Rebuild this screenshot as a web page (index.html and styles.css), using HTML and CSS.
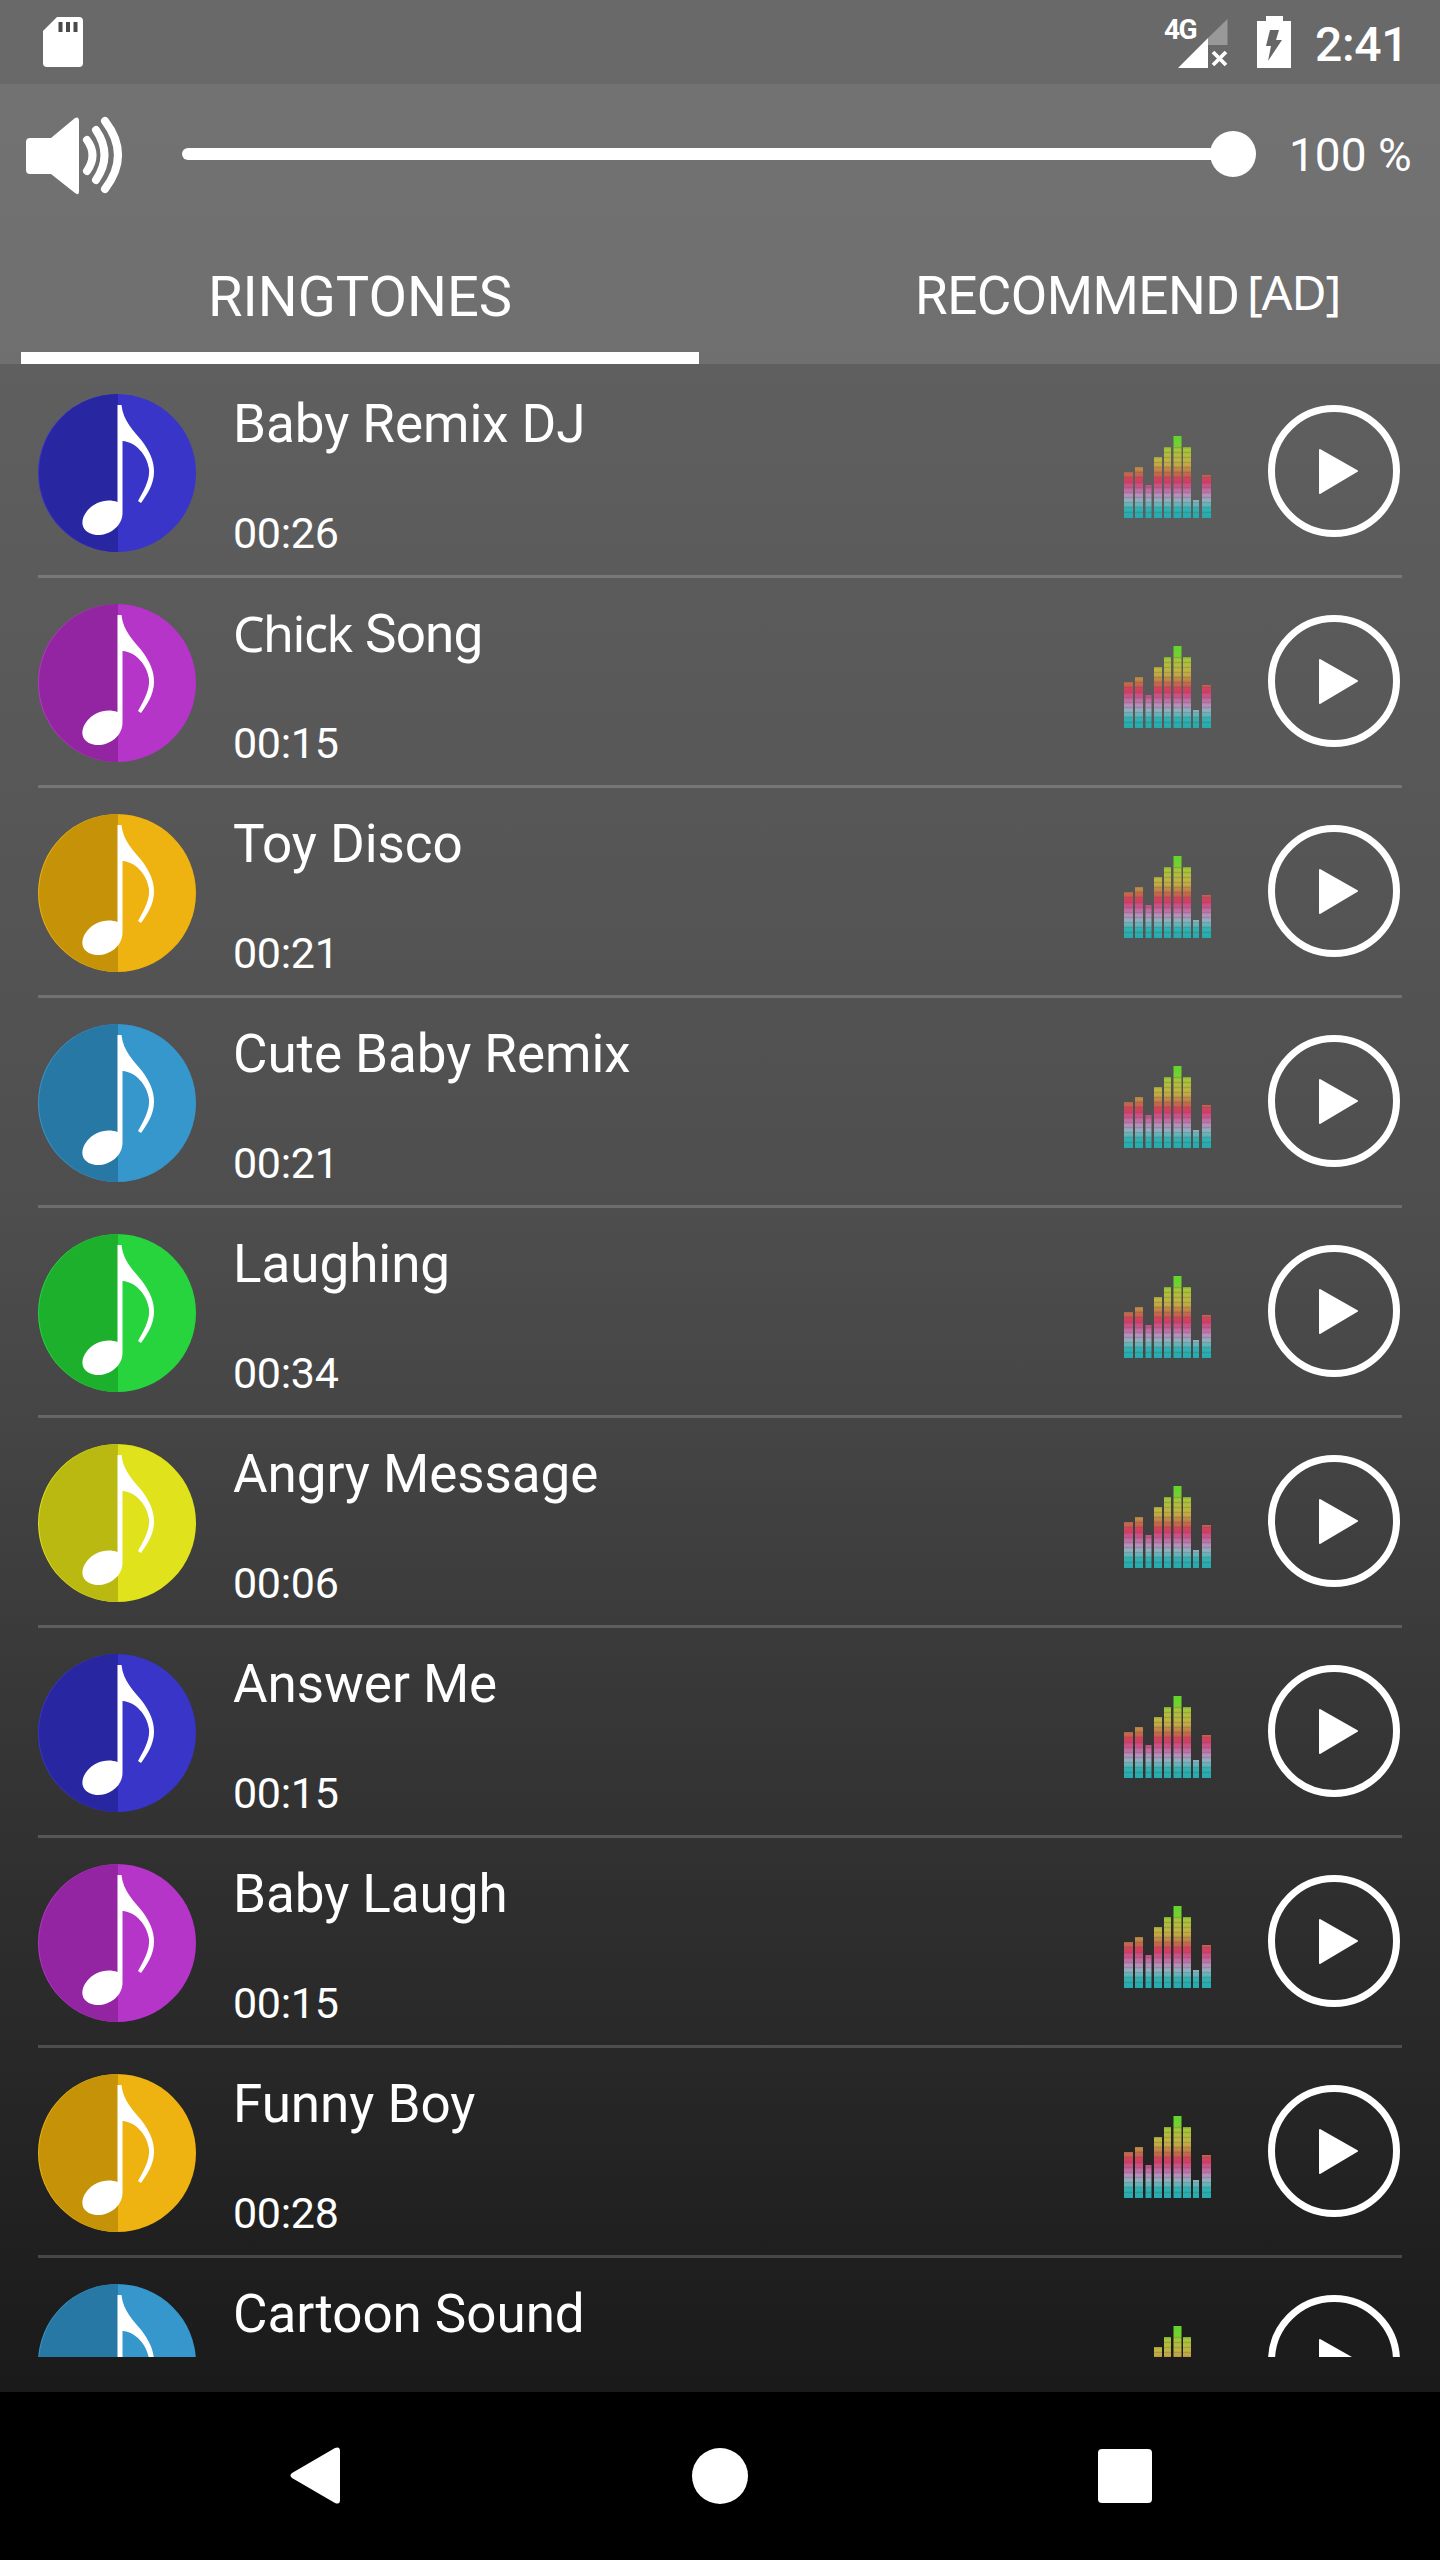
FILE: index.html
```html
<!DOCTYPE html>
<html lang="en">
<head>
<meta charset="utf-8">
<title>Ringtones</title>
<link rel="stylesheet" href="styles.css">
</head>
<body>
<svg class="defs" width="0" height="0" aria-hidden="true">
  <defs>
    <linearGradient id="bars" gradientUnits="userSpaceOnUse" x1="0" y1="0" x2="0" y2="82">
      <stop offset="0" stop-color="#5fd62c"/>
      <stop offset=".11" stop-color="#74d030"/>
      <stop offset=".17" stop-color="#a9c438"/>
      <stop offset=".33" stop-color="#c4b244"/>
      <stop offset=".45" stop-color="#c27048"/>
      <stop offset=".54" stop-color="#d83a60"/>
      <stop offset=".63" stop-color="#c75c94"/>
      <stop offset=".72" stop-color="#b98fbd"/>
      <stop offset=".8" stop-color="#86b6c0"/>
      <stop offset=".9" stop-color="#2cb2b2"/>
      <stop offset="1" stop-color="#26a9ae"/>
    </linearGradient>
    <symbol id="eq" viewBox="0 0 88 82">
      <path fill="url(#bars)" d="M0 36h9v46H0zM11 31h8v51h-8zM21.500 49h6v33h-6zM30 21h8v61h-8zM40 11h7v71h-7zM49.500 0h8v82h-8zM59 11h8v71h-8zM69 64h6v18h-6zM78 39h9v43h-9z"/>
      <path stroke="#4a4a4a" stroke-opacity=".22" stroke-width="1.300" d="M0 11.500h88M0 16.500h88M0 21.500h88M0 26.500h88M0 31.500h88M0 36.500h88M0 41.500h88M0 46.500h88M0 51.500h88M0 56.500h88M0 61.500h88M0 66.500h88M0 71.500h88M0 76.500h88" mask="url(#barmask)"/>
      <mask id="barmask" maskUnits="userSpaceOnUse" x="0" y="0" width="88" height="82"><path fill="#fff" d="M0 36h9v46H0zM11 31h8v51h-8zM21.500 49h6v33h-6zM30 21h8v61h-8zM40 11h7v71h-7zM49.500 0h8v82h-8zM59 11h8v71h-8zM69 64h6v18h-6zM78 39h9v43h-9z"/></mask>
    </symbol>
    <symbol id="note" viewBox="0 0 160 160">
      <circle cx="80" cy="80" r="79" fill="currentColor"/>
      <path class="shade" d="M81 1A79 79 0 0 0 81 159Z"/>
      <path fill="#fff" d="M80.500 12H84.500C86 28 97 38 105 48C113 59 117 68 117 79C117 92 109 103 104 110L101 108C107 97 113 87 112 76C110 62 99 49 85.500 48V119C86 134 71 143 59 142C44 140 42 128 50 118C57 109 70 105 80.500 109Z"/>
    </symbol>
    <symbol id="play" viewBox="0 0 134 134">
      <circle cx="67" cy="67" r="62.500" fill="none" stroke="#fff" stroke-width="7"/>
      <path d="M53 46L90 67L53 89Z" fill="#fff" stroke="#fff" stroke-width="2" stroke-linejoin="round"/>
    </symbol>
  </defs>
</svg>
<div class="screen">
  <header class="header">
    <div class="status">
      <svg class="sd" viewBox="0 0 42 52" width="42" height="52"><path fill="#fff" d="M15 1H37Q41 1 41 5V47Q41 51 37 51H5Q1 51 1 47V15Z"/><path fill="#4a4a4a" d="M16.500 6h4v10h-4zM24 6h4v10h-4zM31.500 6h4v10h-4z"/></svg>
      <div class="status-right">
        <span class="net">4G</span>
        <svg class="signal" viewBox="0 0 50 50" width="50" height="50"><path fill="#999" d="M49.500 1V27H30V20Z"/><path fill="#fff" d="M0 50L30 20V50Z"/><path stroke="#fff" stroke-width="3.800" d="M35 34L48 47M48 34L35 47"/></svg>
        <svg class="battery" viewBox="0 0 34 52" width="34" height="52"><path fill="#fff" d="M9 0H26V5H34V52H0V5H9Z"/><path fill="#666" d="M13 14H22L19 24H25L11 45L14 30H9Z"/></svg>
        <span class="clock">2:41</span>
      </div>
    </div>
    <div class="volume">
      <svg class="speaker" viewBox="0 0 98 80" width="98" height="80"><path fill="#fff" d="M5 22H26L50 2Q54 0 54 5V75Q54 80 50 77L26 58H5Q1 58 1 54V26Q1 22 5 22Z"/><path fill="none" stroke="#fff" stroke-width="8" stroke-linecap="round" d="M62 24Q73 39 62 55M71 14Q88 39 71 64M80 5Q106 39 80 73"/></svg>
      <div class="track"><span class="knob"></span></div>
      <span class="percent">100 %</span>
    </div>
    <nav class="tabs">
      <div class="tab active"><span class="ring">RINGTONES</span></div>
      <div class="tab"><span class="rec">RECOMMEND</span><span class="ad">[AD]</span></div>
    </nav>
  </header>
  <main class="list">
    <div class="row blue"><svg class="note"><use href="#note"/></svg><div class="info"><span class="title">Baby Remix DJ</span><span class="time">00:26</span></div><svg class="eq"><use href="#eq"/></svg><svg class="play"><use href="#play"/></svg></div>
    <div class="row purple"><svg class="note"><use href="#note"/></svg><div class="info"><span class="title split"><span class="alt">Chick</span><span>Song</span></span><span class="time">00:15</span></div><svg class="eq"><use href="#eq"/></svg><svg class="play"><use href="#play"/></svg></div>
    <div class="row orange"><svg class="note"><use href="#note"/></svg><div class="info"><span class="title">Toy Disco</span><span class="time">00:21</span></div><svg class="eq"><use href="#eq"/></svg><svg class="play"><use href="#play"/></svg></div>
    <div class="row sky"><svg class="note"><use href="#note"/></svg><div class="info"><span class="title">Cute Baby Remix</span><span class="time">00:21</span></div><svg class="eq"><use href="#eq"/></svg><svg class="play"><use href="#play"/></svg></div>
    <div class="row green"><svg class="note"><use href="#note"/></svg><div class="info"><span class="title">Laughing</span><span class="time">00:34</span></div><svg class="eq"><use href="#eq"/></svg><svg class="play"><use href="#play"/></svg></div>
    <div class="row yellow"><svg class="note"><use href="#note"/></svg><div class="info"><span class="title">Angry Message</span><span class="time">00:06</span></div><svg class="eq"><use href="#eq"/></svg><svg class="play"><use href="#play"/></svg></div>
    <div class="row blue"><svg class="note"><use href="#note"/></svg><div class="info"><span class="title">Answer Me</span><span class="time">00:15</span></div><svg class="eq"><use href="#eq"/></svg><svg class="play"><use href="#play"/></svg></div>
    <div class="row purple"><svg class="note"><use href="#note"/></svg><div class="info"><span class="title">Baby Laugh</span><span class="time">00:15</span></div><svg class="eq"><use href="#eq"/></svg><svg class="play"><use href="#play"/></svg></div>
    <div class="row orange"><svg class="note"><use href="#note"/></svg><div class="info"><span class="title">Funny Boy</span><span class="time">00:28</span></div><svg class="eq"><use href="#eq"/></svg><svg class="play"><use href="#play"/></svg></div>
    <div class="row sky"><svg class="note"><use href="#note"/></svg><div class="info"><span class="title">Cartoon Sound</span></div><svg class="eq"><use href="#eq"/></svg><svg class="play"><use href="#play"/></svg></div>
  </main>
  <footer class="navbar">
    <svg viewBox="0 0 52 60" width="52" height="60"><path fill="#fff" d="M2 27L45 2Q50 0 50 5V54Q50 59 45 57L2 32Q-1 29.500 2 27Z"/></svg>
    <svg viewBox="0 0 56 56" width="56" height="56"><circle cx="28" cy="28" r="28" fill="#fff"/></svg>
    <svg viewBox="0 0 54 54" width="54" height="54"><rect width="54" height="54" rx="4" fill="#fff"/></svg>
  </footer>
</div>
</body>
</html>
```
FILE: styles.css
```css
* { box-sizing: border-box; }
body { margin: 0; background: #000; color: #fff; font-family: Roboto, "Noto Sans", sans-serif; }
.defs { position: absolute; }
svg { display: block; flex: none; }
span { white-space: nowrap; }
.screen { width: 1440px; height: 2560px; display: flex; flex-direction: column; overflow: hidden; background: linear-gradient(#696969 0, #5f5f5f 364px, #575757 800px, #4e4e4e 1200px, #464646 1400px, #393939 1660px, #2c2c2c 1960px, #1f1f1f 2260px, #1a1a1a 2392px); }
.header { height: 364px; flex: none; background: linear-gradient(#737373, #6f6f6f); }
.status { height: 84px; background: #696969; display: flex; justify-content: space-between; align-items: flex-start; padding: 16px 31px 0 42px; }
.status-right { display: flex; align-items: flex-start; }
.net { font-size: 28px; font-weight: 700; line-height: 28px; width: 14px; letter-spacing: -1.500px; }
.signal { margin: 2px 29px 0 0; }
.battery { margin-right: 24px; }
.clock { font-size: 48px; font-weight: 500; line-height: 58px; width: 94px; letter-spacing: -.3px; }
.volume { height: 140px; display: flex; align-items: flex-start; padding: 32px 28px 0 25px; }
.speaker { width: 98px; height: 80px; }
.track { width: 1069px; height: 12px; border-radius: 6px; background: #fff; margin: 32px 0 0 59px; display: flex; justify-content: flex-end; align-items: center; }
.knob { width: 46px; height: 46px; flex: none; border-radius: 50%; background: #fff; margin-right: -5px; }
.percent { font-size: 46px; line-height: 54px; margin: 12px 0 0 38px; }
.tabs { height: 140px; display: flex; padding: 0 21px; }
.tab { display: flex; align-items: flex-start; width: 678px; height: 140px; padding-top: 41px; border-bottom: 12px solid transparent; justify-content: center; }
.tab.active { border-color: #fff; }
.tab + .tab { margin-left: 42px; justify-content: flex-start; padding-left: 174px; }
.ring { font-size: 56px; line-height: 64px; }
.rec { font-size: 53px; line-height: 62px; letter-spacing: -.5px; width: 330px; }
.ad { font-family: "Noto Sans", sans-serif; font-size: 48px; line-height: 54px; letter-spacing: -1px; margin-left: 2px; }
.list { height: 1993px; flex: none; overflow: hidden; padding-top: 4px; }
.row { height: 210px; display: flex; align-items: flex-start; margin: 0 38px; border-bottom: 3px solid rgba(255,255,255,.18); }
.note { width: 160px; height: 160px; margin: 25px 0 0 -1px; }
.info { display: flex; flex-direction: column; width: 887px; margin-left: 36px; padding-top: 25px; color: #fff; }
.title { font-size: 53px; line-height: 62px; letter-spacing: -.05px; }
.split { display: flex; }
.alt { font-family: "Noto Sans", sans-serif; font-size: 50px; line-height: 60px; letter-spacing: -1.500px; width: 132px; }
.split span:last-child { letter-spacing: -.8px; }
.time { font-size: 43px; line-height: 50px; margin-top: 53px; letter-spacing: -.3px; }
.eq { width: 88px; height: 82px; margin-top: 68px; margin-left: 4px; }
.play { width: 134px; height: 134px; margin: 36px 0 0 55px; }
.shade { fill: var(--shade); }
.blue { color: #3835c8; --shade: #2826a0; }
.purple { color: #b535c8; --shade: #9324a2; }
.orange { color: #eeb211; --shade: #c69308; }
.sky { color: #3697cc; --shade: #2878a6; }
.green { color: #28d43e; --shade: #1cb02c; }
.yellow { color: #e0e21c; --shade: #b9b912; }
.navbar { margin-top: 35px; height: 168px; background: #000; display: flex; align-items: center; padding-left: 290px; gap: 350px; }
```
